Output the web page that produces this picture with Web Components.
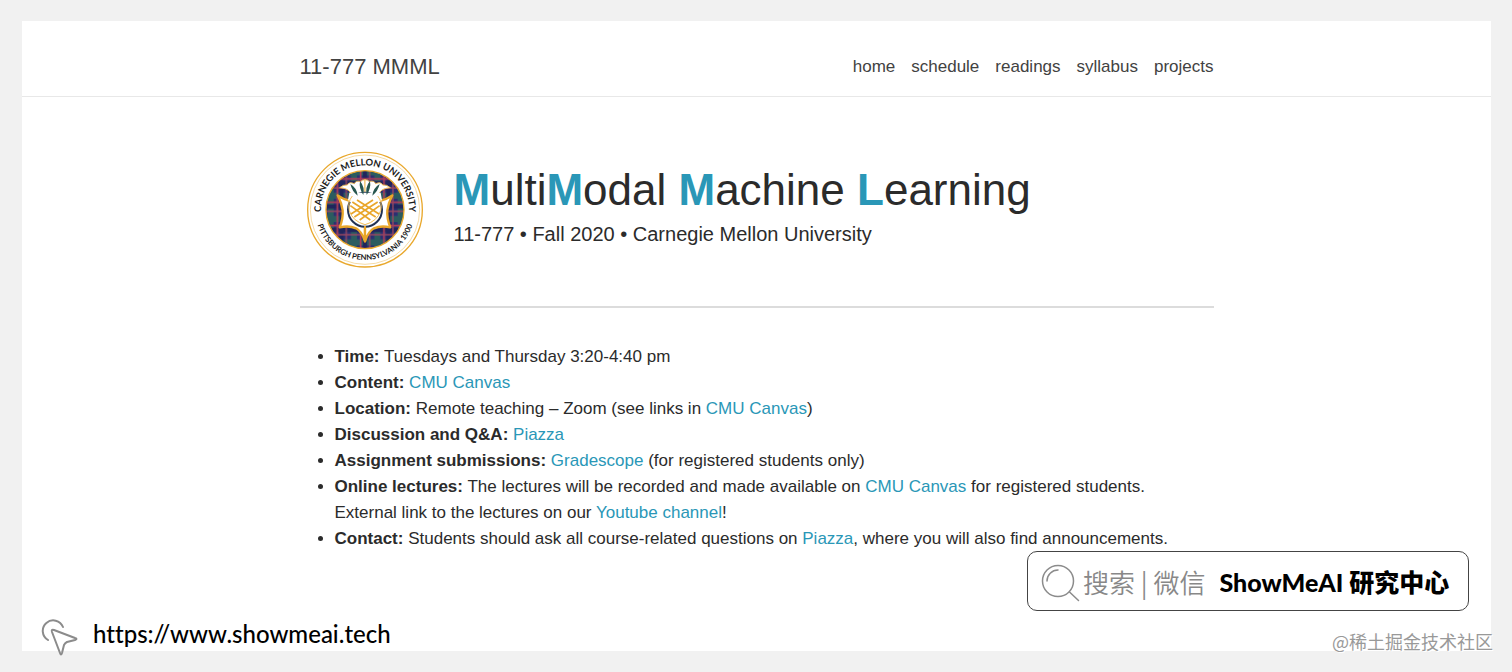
<!DOCTYPE html>
<html lang="en">
<head>
    <meta charset="UTF-8">
    <meta name="viewport" content="width=device-width, initial-scale=1.0">
    <title>11-777 MMML</title>
    <style>
        * {
            box-sizing: border-box;
        }
        body {
            --accent: #2a97b7;
            --content: 914px;
            margin: 0;
            min-height: 100vh;
            padding: 21px 21px 21px 22px;
            display: flex;
            flex-direction: column;
            background: #f1f1f1;
            color: #2b2b2b;
            font-family: "Liberation Sans", Arial, sans-serif;
            font-size: 17px;
            line-height: 26px;
            position: relative;
        }
        b {
            font-weight: bold;
        }
        a {
            color: var(--accent);
            text-decoration: none;
        }
        site-header a {
            color: #424242;
            font-size: 22px;
        }
        course-title b {
            color: var(--accent);
        }
    </style>
</head>
<body>
    <course-page>
        <site-header slot="header">
            <a slot="brand" href="#home">11-777 MMML</a>
            <nav-link href="#home">home</nav-link>
            <nav-link href="#schedule">schedule</nav-link>
            <nav-link href="#readings">readings</nav-link>
            <nav-link href="#syllabus">syllabus</nav-link>
            <nav-link href="#projects">projects</nav-link>
        </site-header>

        <course-title>
            <university-seal slot="seal"></university-seal>
            <b>M</b>ulti<b>M</b>odal <b>M</b>achine <b>L</b>earning
            <span slot="subtitle">11-777 • Fall 2020 • Carnegie Mellon University</span>
        </course-title>

        <info-list>
            <info-item label="Time:">Tuesdays and Thursday 3:20-4:40 pm</info-item>
            <info-item label="Content:"><a href="#canvas">CMU Canvas</a></info-item>
            <info-item label="Location:">Remote teaching – Zoom (see links in <a href="#canvas">CMU Canvas</a>)</info-item>
            <info-item label="Discussion and Q&amp;A:"><a href="#piazza">Piazza</a></info-item>
            <info-item label="Assignment submissions:"><a href="#gradescope">Gradescope</a> (for registered students only)</info-item>
            <info-item label="Online lectures:">The lectures will be recorded and made available on <a href="#canvas">CMU Canvas</a> for registered students.<br>External link to the lectures on our <a href="#youtube">Youtube channel</a>!</info-item>
            <info-item label="Contact:">Students should ask all course-related questions on <a href="#piazza">Piazza</a>, where you will also find announcements.</info-item>
        </info-list>
    </course-page>

    <source-link href="https://www.showmeai.tech">https://www.showmeai.tech</source-link>
    <search-badge value="ShowMeAI 研究中心">搜索 | 微信</search-badge>
    <water-mark>@稀土掘金技术社区</water-mark>

    <template id="course-page">
        <style>
            :host {
                display: flex;
                flex-direction: column;
                flex: 1;
                background: #fff;
            }
            main {
                width: 100%;
                max-width: var(--content);
                margin: 0 auto;
                padding-bottom: 48px;
            }
        </style>
        <slot name="header"></slot>
        <main><slot></slot></main>
    </template>

    <template id="site-header">
        <style>
            :host {
                display: block;
                border-bottom: 1px solid #e8e8e8;
            }
            header {
                display: flex;
                flex-wrap: wrap;
                align-items: center;
                justify-content: space-between;
                max-width: var(--content);
                margin: 0 auto;
                padding: 33px 0 16px;
            }
            nav {
                display: flex;
                flex-wrap: wrap;
                gap: 16px;
            }
        </style>
        <header>
            <slot name="brand"></slot>
            <nav><slot></slot></nav>
        </header>
    </template>

    <template id="nav-link">
        <style>
            :host {
                display: block;
            }
            a {
                color: #424242;
                text-decoration: none;
            }
        </style>
        <a><slot></slot></a>
    </template>

    <template id="course-title">
        <style>
            :host {
                display: flex;
                align-items: center;
                gap: 24px;
                padding: 48px 0 31px;
                border-bottom: 2px solid #dcdcdc;
            }
            h1, p {
                margin: 0;
                font-weight: normal;
            }
            h1 {
                font-size: 44px;
                line-height: 52px;
            }
            p {
                font-size: 20px;
                line-height: 36px;
            }
            div {
                padding-bottom: 4px;
            }
        </style>
        <slot name="seal"></slot>
        <div>
            <h1><slot></slot></h1>
            <p><slot name="subtitle"></slot></p>
        </div>
    </template>

    <template id="university-seal">
        <style>
            :host {
                display: block;
                flex: none;
                width: 130px;
            }
            svg {
                display: block;
                width: 100%;
            }
            text {
                font-family: Lato, sans-serif;
                font-weight: 700;
                fill: #1b1b1b;
                text-anchor: middle;
            }
            .top {
                font-size: 28px;
            }
            .bottom {
                font-size: 23px;
            }
        </style>
        <svg viewBox="15 15 390 390" role="img" aria-label="Carnegie Mellon University seal">
            <defs>
                <pattern id="plaid" width="70" height="70" x="20" y="10" patternUnits="userSpaceOnUse">
                    <rect width="70" height="70" fill="#2b2f72"/>
                    <path d="M0 17h70M17 0v70" stroke="#2a6b58" stroke-width="18" opacity=".75"/>
                    <path d="M0 50h70M50 0v70" stroke="#20255c" stroke-width="12"/>
                    <path d="M0 37h70M37 0v70" stroke="#b03c58" stroke-width="5"/>
                    <path d="M0 64h70M64 0v70" stroke="#974660" stroke-width="4"/>
                </pattern>
                <path id="top-arc" d="M83 244a132 132 0 1 1 254 0"/>
                <path id="bottom-arc" d="M67 169a149 149 0 1 0 286 0"/>
                <!-- left half of the thistle, mirrored for the right half -->
                <g id="half" stroke-linejoin="round">
                    <path d="M210 304q-10-30-27-39-20-9-49-3 11-27 9-51-3-22-15-45 18 13 40 17l42 78z" fill="#fff" stroke="#e9a62a" stroke-width="7"/>
                    <path d="M210 119q-10 0-13 6-14-5-19 6-16-7-21 4-12-2-23 8 23 2 30 12 7 12 15 19h31z" fill="#fff" stroke="#f0bd58" stroke-width="3"/>
                </g>
            </defs>
            <circle cx="210" cy="209" r="172" fill="#fff" stroke="#e9a82c" stroke-width="4"/>
            <circle cx="210" cy="209" r="164" fill="none" stroke="#f0c979" stroke-width="2"/>
            <circle cx="210" cy="209" r="117" fill="url(#plaid)" stroke="#e9a82c" stroke-width="4"/>
            <use href="#half"/>
            <use href="#half" transform="matrix(-1 0 0 1 420 0)"/>
            <circle cx="210" cy="209" r="51" fill="#fff" stroke="#223252" stroke-width="6"/>
            <path d="M163 158h94l4 22-14 12h-74l-14-12z" fill="#fff"/>
            <path d="M172 168q-15 18-9 44 10 32 47 42 37-10 47-42 6-26-9-44" fill="none" stroke="#f0bd58" stroke-width="3"/>
            <path d="M166 197l60 43M172 186l70 45M186 180l66 42M254 197l-60 43M248 186l-70 45M234 180l-66 42" fill="none" stroke="#e9a62a" stroke-width="5"/>
            <path d="M188 167q-17-13-22-35 20 12 22 35zM205 165q-14-21-10-42 15 18 10 42zM215 165q14-21 10-42-15 18-10 42zM232 167q17-13 22-35-20 12-22 35z" fill="#28574f"/>
            <path d="M210 258v20" stroke="#e9a62a" stroke-width="6"/>
            <text class="top"><textPath href="#top-arc" startOffset="50%">CARNEGIE MELLON UNIVERSITY</textPath></text>
            <text class="bottom"><textPath href="#bottom-arc" startOffset="50%">PITTSBURGH PENNSYLVANIA 1900</textPath></text>
        </svg>
    </template>

    <template id="info-list">
        <style>
            :host {
                display: block;
                padding-top: 36px;
            }
            div {
                padding-left: 35px;
            }
        </style>
        <div role="list"><slot></slot></div>
    </template>

    <template id="info-item">
        <style>
            :host {
                display: list-item;
                list-style: disc;
            }
        </style>
        <b></b> <slot></slot>
    </template>

    <template id="source-link">
        <style>
            :host {
                position: absolute;
                left: 40px;
                bottom: 14px;
            }
            a {
                display: flex;
                align-items: center;
                gap: 14px;
                color: #000;
                font: 500 24px/28px Lato, sans-serif;
                font-variant-ligatures: none;
                text-decoration: none;
            }
            svg {
                width: 39px;
                height: 39px;
            }
            span {
                padding-bottom: 9px;
            }
        </style>
        <a>
            <svg viewBox="0 0 39 39" fill="none" stroke="#8b8b8b" stroke-width="2" stroke-linecap="round" stroke-linejoin="round" aria-hidden="true">
                <path d="M8 21A10.5 10.5 0 1 1 23 8"/>
                <path d="M12 13q-1-3 2-2l21 8q3 1 0 2l-8 2q-2 1-3 3l-2 8q-1 3-2 0z"/>
            </svg>
            <span><slot></slot></span>
        </a>
    </template>

    <template id="search-badge">
        <style>
            :host {
                position: absolute;
                right: 43px;
                bottom: 61px;
                box-sizing: border-box;
                width: 442px;
                height: 60px;
                padding: 2px 12px 0;
                display: flex;
                align-items: center;
                background: #fff;
                border: 1px solid #444;
                border-radius: 10px;
            }
            svg {
                flex: none;
                width: 40px;
                height: 40px;
                margin-right: 3px;
            }
            label {
                flex: none;
                color: #888;
                font: 350 26px/38px "Noto Sans CJK SC", sans-serif;
            }
            input {
                flex: 1;
                min-width: 0;
                margin-left: 14px;
                padding: 0;
                border: 0;
                outline: 0;
                background: none;
                color: #000;
                font: 900 25px/38px Lato, "Noto Sans CJK SC", sans-serif;
            }
        </style>
        <svg viewBox="0 0 40 40" fill="none" stroke="#8b8b8b" stroke-linecap="round" aria-hidden="true">
            <circle cx="18" cy="19" r="15.5" stroke-width="1.5"/>
            <path d="M7 19A11 11 0 0 1 18 8M29.5 30l9 8.5" stroke-width="1.5"/>
        </svg>
        <label for="query"><slot></slot></label>
        <input id="query" type="text">
    </template>

    <template id="water-mark">
        <style>
            :host {
                position: absolute;
                right: 19px;
                bottom: 18px;
                color: #999;
                font: 400 18px/26px "Noto Sans CJK SC", sans-serif;
                text-shadow: 1px 1px #fff;
            }
        </style>
        <slot></slot>
    </template>

    <script>
        // each element clones the template that carries its own name
        class TemplateElement extends HTMLElement {
            constructor() {
                super();
                const template = document.getElementById(this.localName);
                this.attachShadow({mode: "open"}).appendChild(template.content.cloneNode(true));
            }
        }

        class LinkElement extends TemplateElement {
            connectedCallback() {
                this.shadowRoot.querySelector("a").href = this.getAttribute("href");
            }
        }

        class InfoItem extends TemplateElement {
            connectedCallback() {
                this.setAttribute("role", "listitem");
                this.shadowRoot.querySelector("b").textContent = this.getAttribute("label");
            }
        }

        class SearchBadge extends TemplateElement {
            connectedCallback() {
                this.shadowRoot.querySelector("input").value = this.getAttribute("value");
            }
        }

        customElements.define("course-page", class extends TemplateElement {});
        customElements.define("site-header", class extends TemplateElement {});
        customElements.define("nav-link", class extends LinkElement {});
        customElements.define("course-title", class extends TemplateElement {});
        customElements.define("university-seal", class extends TemplateElement {});
        customElements.define("info-list", class extends TemplateElement {});
        customElements.define("info-item", InfoItem);
        customElements.define("source-link", class extends LinkElement {});
        customElements.define("search-badge", SearchBadge);
        customElements.define("water-mark", class extends TemplateElement {});
    </script>
</body>
</html>
